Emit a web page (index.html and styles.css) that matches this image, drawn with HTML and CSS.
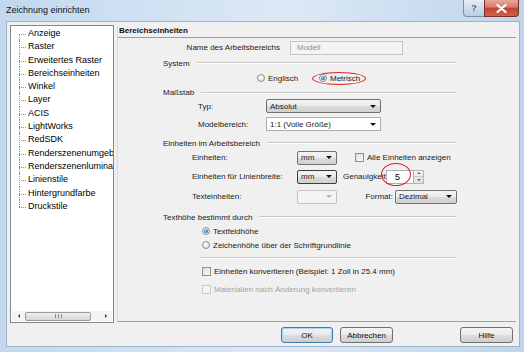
FILE: index.html
```html
<!DOCTYPE html>
<html lang="de">
<head>
  <meta charset="UTF-8" />
  <title>Zeichnung einrichten</title>
  <link rel="stylesheet" href="styles.css">
</head>
<body>
  <div class="window">
    <div class="titlebar">
      <span class="title">Zeichnung einrichten</span>
      <div class="caption">
        <span class="cap-btn help">?</span>
        <span class="cap-btn close">
          <svg width="11" height="9" viewBox="0 0 11 9"><path d="M1.5 1 L9.5 8 M9.5 1 L1.5 8" stroke="#fff" stroke-width="2.2" stroke-linecap="round"/></svg>
        </span>
      </div>
    </div>

    <div class="client">
      <div class="main">
        <div class="tree">
          <ul class="tree-list">
            <li>Anzeige</li>
            <li>Raster</li>
            <li>Erweitertes Raster</li>
            <li>Bereichseinheiten</li>
            <li>Winkel</li>
            <li>Layer</li>
            <li>ACIS</li>
            <li>LightWorks</li>
            <li>RedSDK</li>
            <li>Renderszenenumgebung</li>
            <li>Renderszenenluminanz</li>
            <li>Linienstile</li>
            <li>Hintergrundfarbe</li>
            <li>Druckstile</li>
          </ul>
          <div class="hscroll">
            <span class="sc-arrow left"></span>
            <span class="sc-thumb"><span class="grip"></span></span>
            <span class="sc-arrow right"></span>
          </div>
        </div>

        <div class="panel">
          <div class="panel-head">Bereichseinheiten</div>

          <div class="row r-name">
            <span class="name-label">Name des Arbeitsbereichs</span>
            <span class="textbox disabled">Modell</span>
          </div>

          <div class="row group g-system"><span>System</span><i class="gline"></i></div>

          <div class="row r-radios">
            <span class="opt opt-en"><i class="radio"></i>Englisch</span>
            <span class="opt marked"><i class="radio on"></i>Metrisch<b class="ring ring-metric"></b></span>
          </div>

          <div class="row group g-scale"><span>Maßstab</span><i class="gline"></i></div>

          <div class="row r-scale">
            <span class="lbl lbl-scale">Typ:</span>
            <span class="combo list wide"><span>Absolut</span><i class="arrow"></i></span>
          </div>
          <div class="row r-scale gap4">
            <span class="lbl lbl-scale">Modelbereich:</span>
            <span class="combo edit wide"><span>1:1 (Volle Größe)</span><i class="arrow"></i></span>
          </div>

          <div class="row group g-units gap5"><span>Einheiten im Arbeitsbereich</span><i class="gline"></i></div>

          <div class="row r-units">
            <span class="lbl lbl-units">Einheiten:</span>
            <span class="combo list small"><span>mm</span><i class="arrow"></i></span>
            <span class="check-opt all-units"><i class="check"></i>Alle Einheiten anzeigen</span>
          </div>
          <div class="row r-units gap4">
            <span class="lbl lbl-units">Einheiten für Linienbreite:</span>
            <span class="combo list small focus"><span>mm</span><i class="arrow"></i></span>
            <span class="prec-label">Genauigkeit</span>
            <span class="spin">
              <span class="textbox prec">5</span>
              <span class="spin-btns"><i class="up"></i><i class="down"></i></span>
              <b class="ring ring-prec"></b>
            </span>
          </div>
          <div class="row r-units gap5">
            <span class="lbl lbl-units">Texteinheiten:</span>
            <span class="combo list small off"><span></span><i class="arrow"></i></span>
            <span class="fmt-label">Format:</span>
            <span class="combo list fmt"><span>Dezimal</span><i class="arrow"></i></span>
          </div>

          <div class="row group g-height gap6"><span>Texthöhe bestimmt durch</span><i class="gline"></i></div>

          <div class="row r-opt"><span class="opt"><i class="radio on"></i>Textfeldhöhe</span></div>
          <div class="row r-opt"><span class="opt"><i class="radio"></i>Zeichenhöhe über der Schriftgrundlinie</span></div>

          <div class="row r-sep"><i class="gline"></i></div>

          <div class="row r-opt"><span class="check-opt"><i class="check"></i>Einheiten konvertieren (Beispiel: 1 Zoll in 25.4 mm)</span></div>
          <div class="row r-opt gap4"><span class="check-opt off"><i class="check"></i>Materialien nach Änderung konvertieren</span></div>
        </div>
      </div>

      <div class="footer">
        <button class="btn default">OK</button>
        <button class="btn">Abbrechen</button>
        <button class="btn help-btn">Hilfe</button>
      </div>
    </div>
  </div>
</body>
</html>
```

FILE: styles.css
```css
* {
  box-sizing: border-box;
}
body {
  margin: 0;
  font-family: "Liberation Sans", Arial, sans-serif;
  font-size: 8px;
  color: #1a1a1a;
}
.window {
  width: 524px;
  height: 352px;
  background: linear-gradient(to right, #c3d8ee, #dce9f6 55%, #bfd4eb);
  display: flex;
  flex-direction: column;
}

/* title bar */
.titlebar {
  height: 21px;
  display: flex;
  align-items: flex-start;
  padding-left: 6px;
}
.title {
  font-size: 9px;
  line-height: 20px;
  color: #111;
}
.caption {
  margin-left: auto;
  margin-right: 5px;
  display: flex;
}
.cap-btn {
  height: 17px;
  display: flex;
  align-items: center;
  justify-content: center;
  border: 1px solid #7d8ea6;
  border-top: none;
}
.help {
  width: 21px;
  border-right: none;
  border-radius: 0 0 0 4px;
  background: linear-gradient(#e6eef8, #cfdcec 50%, #bccde3);
  color: #5b6472;
  font-size: 9px;
  font-weight: bold;
}
.close {
  width: 35px;
  border-color: #7a3028;
  border-radius: 0 0 4px 0;
  background: linear-gradient(#e8a89c, #d9786a 45%, #c5432f 50%, #d1604a);
}

/* client area */
.client {
  margin: 0 4px 0 6px;
  height: 326px;
  background: #f0f0f0;
  border: 1px solid #9fb2c9;
  display: flex;
  flex-direction: column;
}
.main {
  display: flex;
  gap: 3px;
  padding: 3px 0 0 3px;
}

/* tree */
.tree {
  width: 104px;
  height: 298px;
  background: #fff;
  border: 1px solid #828790;
  display: flex;
  flex-direction: column;
  overflow: hidden;
}
.tree-list {
  list-style: none;
  margin: 0;
  padding: 1px 0 0 0;
  flex: 1;
  font-size: 9px;
  color: #000;
}
.tree-list li {
  position: relative;
  height: 13.3px;
  line-height: 13.3px;
  padding-left: 17px;
  white-space: nowrap;
}
.tree-list li::before {
  content: "";
  position: absolute;
  left: 8px;
  top: 7px;
  width: 7px;
  border-top: 1px dotted #8c8c8c;
}
.tree-list li::after {
  content: "";
  position: absolute;
  left: 8px;
  top: 0;
  bottom: 0;
  border-left: 1px dotted #8c8c8c;
}
.tree-list li:first-child::after {
  top: 7px;
}
.tree-list li:last-child::after {
  bottom: 6px;
}
.hscroll {
  height: 10px;
  margin: 0 1px 1px 1px;
  display: flex;
  align-items: center;
  background: #f4f4f4;
}
.sc-arrow {
  width: 13px;
  height: 10px;
  display: flex;
  align-items: center;
  justify-content: center;
}
.sc-arrow::before {
  content: "";
  border-top: 2px solid transparent;
  border-bottom: 2px solid transparent;
}
.sc-arrow.left::before {
  border-right: 2px solid #333;
}
.sc-arrow.right {
  margin-left: auto;
}
.sc-arrow.right::before {
  border-left: 2px solid #333;
}
.sc-thumb {
  width: 66px;
  height: 9px;
  border: 1px solid #9a9a9a;
  border-radius: 2px;
  background: linear-gradient(#f3f3f3, #e2e2e2 50%, #d6d6d6);
  display: flex;
  align-items: center;
  justify-content: center;
}
.grip {
  width: 7px;
  height: 4px;
  background: repeating-linear-gradient(to right, #8a8a8a 0 1px, transparent 1px 3px);
}

/* right panel */
.panel {
  position: relative;
  width: 399px;
  height: 297px;
  border-left: 1px solid #dadada;
  border-bottom: 1px solid #a0a0a0;
}
.panel-head {
  height: 13px;
  line-height: 12px;
  padding-left: 1px;
  font-weight: bold;
  border-bottom: 1px solid #9c9c9c;
  color: #111;
}
.row {
  display: flex;
  align-items: center;
  height: 14px;
  white-space: nowrap;
}
.gap4 { margin-top: 4px; }
.gap5 { margin-top: 5px; }
.gap6 { margin-top: 6px; }

.r-name {
  margin-top: 2px;
  height: 15px;
}
.name-label {
  width: 162px;
  text-align: right;
  margin-right: 10px;
}
.textbox {
  height: 14px;
  display: flex;
  align-items: center;
  background: #fff;
  border: 1px solid #abadb3;
  padding-left: 6px;
}
.textbox.disabled {
  width: 113px;
  background: #f4f4f4;
  border-color: #c6c6c6;
  color: #8d8d8d;
}

.group {
  padding-left: 45px;
  padding-right: 60px;
}
.g-system { margin-top: 1px; }
.g-scale { height: 13px; }
.gline {
  flex: 1;
  margin-left: 7px;
  height: 2px;
  border-top: 1px solid #c9c9c9;
  border-bottom: 1px solid #fff;
}

.r-radios {
  height: 16px;
  padding-left: 139px;
}
.opt, .check-opt {
  position: relative;
  display: flex;
  align-items: center;
}
.opt-en {
  width: 62px;
}
.radio {
  width: 8px;
  height: 8px;
  margin-right: 3px;
  border-radius: 50%;
  border: 1px solid #8e8f8f;
  background: radial-gradient(circle at 40% 35%, #fff, #e4e4e4 70%, #d0d0d0);
  display: flex;
  align-items: center;
  justify-content: center;
}
.radio.on::after {
  content: "";
  width: 4px;
  height: 4px;
  border-radius: 50%;
  background: radial-gradient(circle at 40% 35%, #8fd0f6, #1f6fb5 70%, #164f87);
}
.ring {
  position: absolute;
  border: 1.5px solid #d6232a;
  border-radius: 50%;
}
.ring-metric {
  left: -7px;
  right: -6px;
  top: -2px;
  bottom: -2px;
}

.r-scale {
  padding-left: 80px;
}
.lbl-scale {
  width: 68px;
}
.combo {
  height: 14px;
  display: flex;
  align-items: center;
  padding: 0 4px 0 3px;
  border-radius: 2px;
}
.combo.list {
  border: 1px solid #707070;
  background: linear-gradient(#f4f4f4, #eaeaea 50%, #dcdcdc 50%, #d0d0d0);
}
.combo.edit {
  border: 1px solid #abadb3;
  border-radius: 0;
  background: #fff;
}
.combo.focus {
  border-color: #3c3c3c;
}
.combo.off {
  border-color: #c2c2c2;
  background: #f4f4f4;
}
.combo.wide {
  width: 115px;
}
.combo.small {
  width: 40px;
}
.combo.fmt {
  width: 62px;
  margin-left: 2px;
}
.arrow {
  margin-left: auto;
  border-top: 3px solid #111;
  border-left: 3px solid transparent;
  border-right: 3px solid transparent;
}
.combo.off .arrow {
  border-top-color: #b5b5b5;
}

.r-units {
  height: 15px;
  padding-left: 74px;
}
.lbl-units {
  width: 105px;
}
.all-units {
  margin-left: 18px;
}
.check {
  width: 9px;
  height: 9px;
  margin-right: 3px;
  border: 1px solid #8e8f8f;
  background: linear-gradient(135deg, #dcdcdc, #fbfbfb);
}
.prec-label {
  margin-left: 6px;
  width: 43px;
}
.spin {
  position: relative;
  display: flex;
  align-items: center;
}
.textbox.prec {
  width: 28px;
  padding-left: 8px;
  font-size: 9px;
  color: #000;
}
.spin-btns {
  width: 10px;
  height: 14px;
  display: flex;
  flex-direction: column;
  border: 1px solid #b5b5b5;
  border-left: none;
  background: linear-gradient(#f6f6f6, #e0e0e0);
}
.spin-btns i {
  flex: 1;
  display: flex;
  align-items: center;
  justify-content: center;
}
.spin-btns .up {
  border-bottom: 1px solid #c8c8c8;
}
.spin-btns .up::before {
  content: "";
  border-bottom: 2px solid #666;
  border-left: 2px solid transparent;
  border-right: 2px solid transparent;
}
.spin-btns .down::before {
  content: "";
  border-top: 2px solid #666;
  border-left: 2px solid transparent;
  border-right: 2px solid transparent;
}
.ring-prec {
  left: -5px;
  width: 30px;
  top: -7px;
  height: 23px;
}
.fmt-label {
  width: 56px;
  text-align: right;
}

.r-opt {
  padding-left: 84px;
}
.r-sep {
  height: 12px;
  padding-left: 82px;
  padding-right: 60px;
}
.r-sep .gline {
  margin-left: 0;
}
.check-opt.off {
  color: #a3a3a3;
}
.check-opt.off .check {
  border-color: #c8c8c8;
  background: #f6f6f6;
}

/* buttons */
.footer {
  display: flex;
  justify-content: flex-end;
  padding: 4px 6px 0 0;
}
.btn {
  width: 53px;
  height: 16px;
  padding: 0;
  margin-left: 7px;
  font-family: "Liberation Sans", Arial, sans-serif;
  font-size: 8px;
  color: #111;
  border: 1px solid #707070;
  border-radius: 3px;
  background: linear-gradient(#f2f2f2, #ebebeb 50%, #dddddd 50%, #cfcfcf);
}
.btn.default {
  width: 52px;
  border-color: #3c7fb1;
  box-shadow: inset 0 0 0 1px #a6d7f3;
}
.help-btn {
  margin-left: 67px;
}
```
